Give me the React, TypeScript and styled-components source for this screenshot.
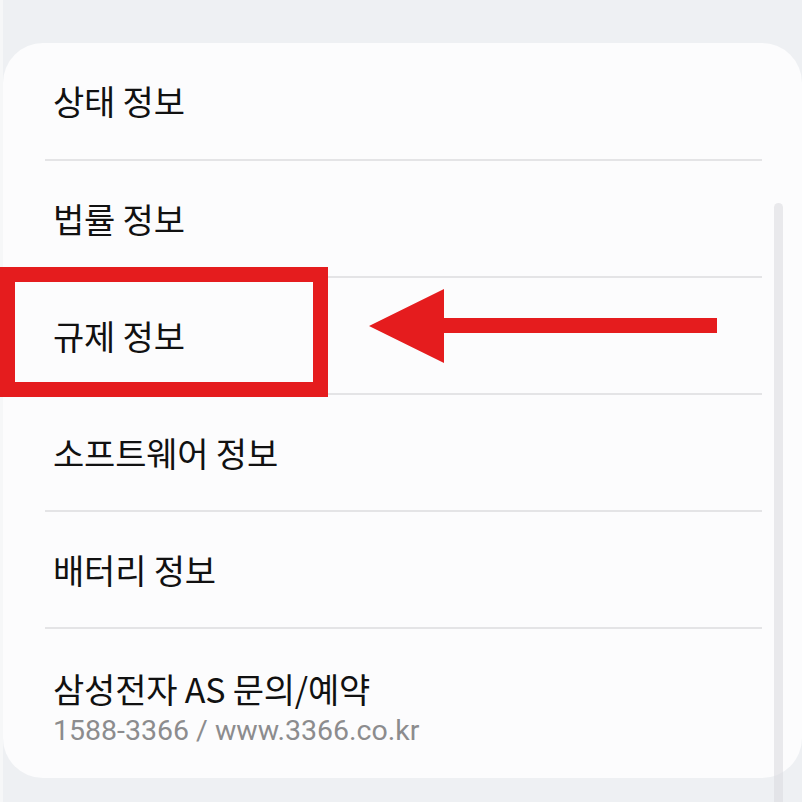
import React from 'react';
import styled, { createGlobalStyle } from 'styled-components';

const GlobalStyle = createGlobalStyle`
  html, body {
    margin: 0;
    padding: 0;
    background: #eef0f3;
    overflow: hidden;
  }
  body {
    font-family: "Noto Sans CJK KR", "Roboto", sans-serif;
  }
`;

interface InfoItem {
  title: string;
  subtitle?: string;
}

const items: InfoItem[] = [
  { title: '상태 정보' },
  { title: '법률 정보' },
  { title: '규제 정보' },
  { title: '소프트웨어 정보' },
  { title: '배터리 정보' },
  { title: '삼성전자 AS 문의/예약', subtitle: '1588-3366 / www.3366.co.kr' },
];

export default function App() {
  return (
    <>
      <GlobalStyle />
      <Screen>
        <Card>
          <List>
            {items.map((item, i) => (
              <Row key={item.title} $last={i === items.length - 1} $first={i === 0}>
                <Title>{item.title}</Title>
                {item.subtitle && <Subtitle>{item.subtitle}</Subtitle>}
              </Row>
            ))}
          </List>
        </Card>
        <ScrollThumb />
        <Highlight />
        <Arrow width="350" height="76" viewBox="0 0 350 76">
          <polygon points="0,37 75,0 75,29 348,29 348,44 75,44 75,74" fill="#e51c1e" />
        </Arrow>
      </Screen>
    </>
  );
}

const Screen = styled.div`
  position: relative;
  width: 802px;
  height: 802px;
  padding: 43px 0 0 3px;
  box-sizing: border-box;
  overflow: hidden;
  box-shadow: inset 3px 0 0 #f6f7f8;
`;

const Card = styled.div`
  width: 799px;
  height: 735px;
  background: #fcfcfd;
  border-radius: 40px;
  box-sizing: border-box;
  padding: 0 40px 0 42px;
`;

const List = styled.div`
  display: flex;
  flex-direction: column;
`;

const Row = styled.div<{ $last?: boolean; $first?: boolean }>`
  display: flex;
  flex-direction: column;
  justify-content: center;
  padding: ${({ $last }) => ($last ? '10px 0 0 8px' : '0 0 0 8px')};
  box-sizing: border-box;
  height: ${({ $last, $first }) => ($last ? '148px' : $first ? '118px' : '117px')};
  border-bottom: ${({ $last }) => ($last ? 'none' : '2px solid #e4e4e6')};
  gap: 5px;
`;

const Title = styled.div`
  font-size: 34px;
  line-height: 40px;
  color: #111111;
  letter-spacing: -0.2px;
`;

const Subtitle = styled.div`
  font-family: "Roboto", "Noto Sans CJK KR", sans-serif;
  font-size: 28.5px;
  line-height: 34px;
  color: #8c8c8e;
`;

const ScrollThumb = styled.div`
  position: absolute;
  left: 774px;
  top: 203px;
  width: 9px;
  height: 620px;
  border-radius: 5px;
  background: rgba(220, 220, 225, 0.6);
`;

const Highlight = styled.div`
  position: absolute;
  left: 0;
  top: 267px;
  width: 328px;
  height: 130px;
  border: 15px solid #e51c1e;
  box-sizing: border-box;
`;

const Arrow = styled.svg`
  position: absolute;
  left: 369px;
  top: 289px;
`;
